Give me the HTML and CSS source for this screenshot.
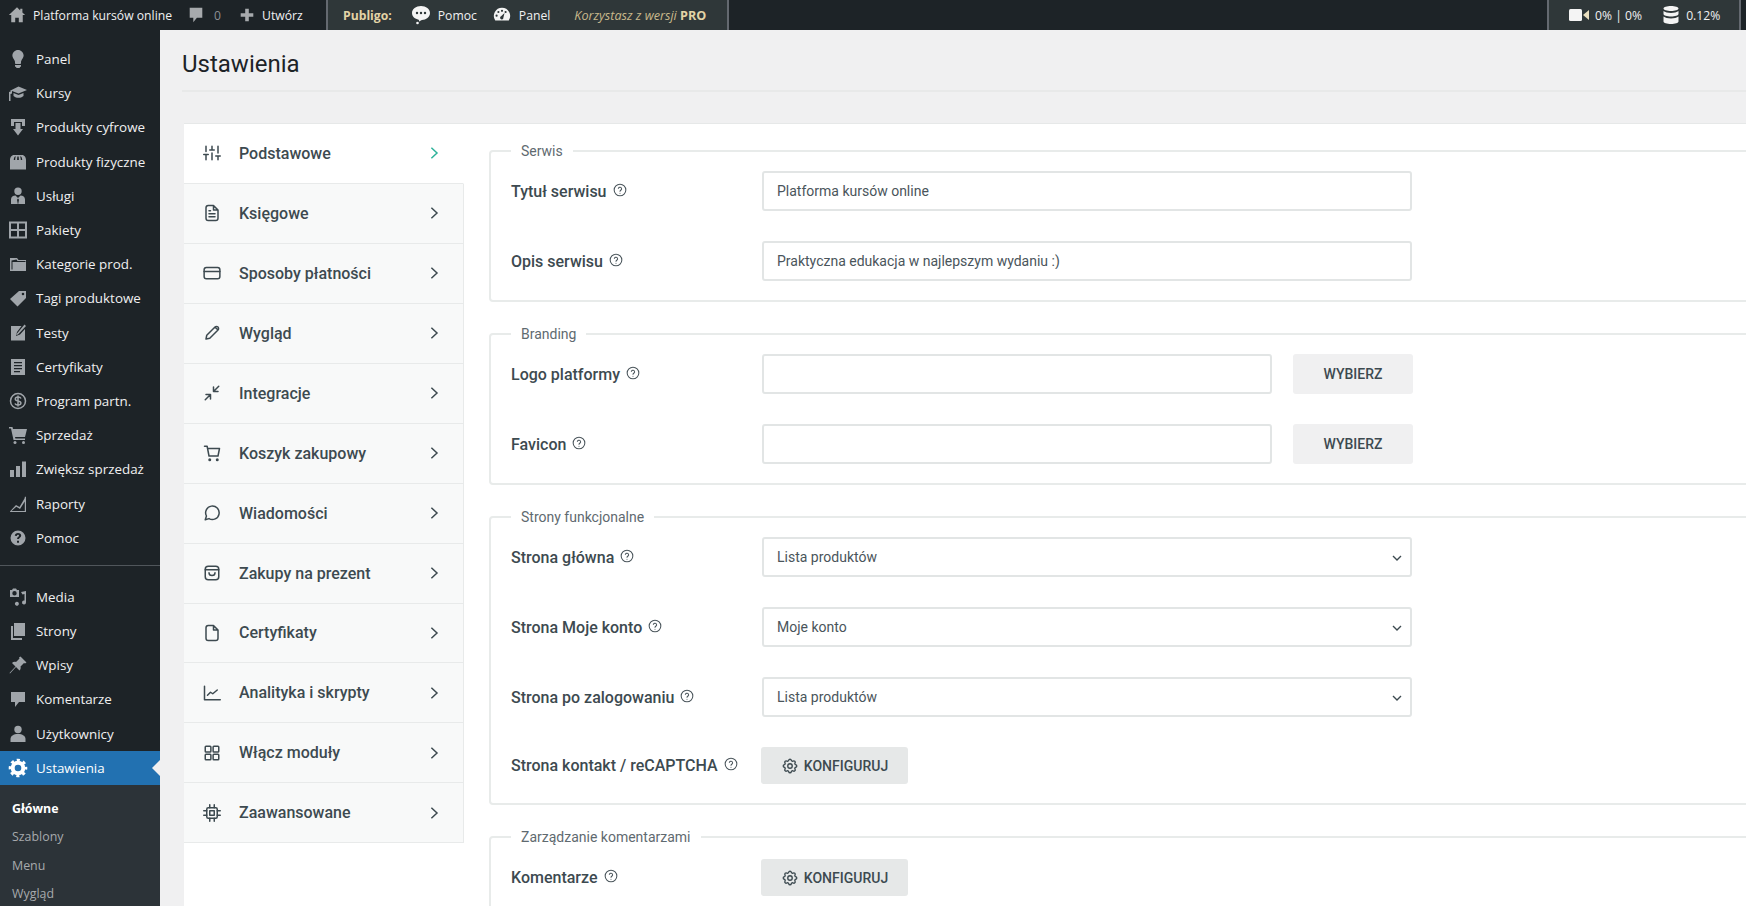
FILE: index.html
```html
<!DOCTYPE html>
<html lang="pl">
<head>
  <meta charset="UTF-8" />
  <title>Ustawienia</title>
  <link rel="stylesheet" href="styles.css">
</head>
<body>

  <svg class="sprite" xmlns="http://www.w3.org/2000/svg">
    <symbol id="i-help" viewBox="0 0 24 24"><circle cx="12" cy="12" r="10"/><path d="M9.2 9.2a2.9 2.9 0 0 1 5.6 1c0 1.9-2.8 2.4-2.8 4"/><path d="M12 17.4v.2"/></symbol>
    <symbol id="i-chev" viewBox="0 0 24 24"><path d="M8.5 5l7.5 7-7.5 7"/></symbol>
    <symbol id="i-gear" viewBox="0 0 24 24"><circle cx="12" cy="12" r="3"/><path d="M10.3 4.3c.4-1.8 3-1.8 3.4 0a1.7 1.7 0 0 0 2.6 1.1c1.5-.9 3.3.8 2.4 2.4a1.7 1.7 0 0 0 1 2.5c1.8.4 1.8 3 0 3.4a1.7 1.7 0 0 0-1 2.6c.9 1.5-.9 3.3-2.4 2.4a1.7 1.7 0 0 0-2.6 1c-.4 1.8-3 1.8-3.4 0a1.7 1.7 0 0 0-2.6-1c-1.5.9-3.3-.9-2.4-2.4a1.7 1.7 0 0 0-1-2.6c-1.8-.4-1.8-3 0-3.4a1.7 1.7 0 0 0 1-2.5c-.9-1.6.9-3.3 2.4-2.4a1.7 1.7 0 0 0 2.6-1.1z"/></symbol>
    <symbol id="i-down" viewBox="0 0 24 24"><path d="M6 9l6 6 6-6"/></symbol>
  </svg>

  <!-- Top bar -->
  <header class="topbar">
    <div class="top-group top-site">
      <svg class="top-icon" viewBox="0 0 20 20"><path d="M10 1.5L1 10h2.6v8H8v-5h4v5h4.4v-8H19l-3-2.8V3h-2.4v2z"/></svg>
      <span class="site-name">Platforma kursów online</span>
      <svg class="top-icon comment-icon" viewBox="0 0 20 20"><path d="M3 2h14v11h-6l-4 5v-5H3z"/></svg>
      <span class="count">0</span>
      <svg class="top-icon plus-icon" viewBox="0 0 20 20"><path d="M8 3h4v5h5v4h-5v5H8v-5H3V8h5z"/></svg>
      <span>Utwórz</span>
    </div>
    <div class="top-panel publigo">
      <strong class="brand">Publigo:</strong>
      <svg class="white-icon bubble" viewBox="0 0 20 20"><path fill-rule="evenodd" d="M10 1c5 0 9 3 9 7s-4 7-8 7c-1 0-1.500 1-2.500 1.500-.5-.5-.3-1.300-.8-1.800C4 14 1 11.500 1 8c0-4 4-7 9-7zM6 6.800a1.200 1.200 0 1 0 0 2.400 1.200 1.200 0 0 0 0-2.400zm4 0a1.200 1.200 0 1 0 0 2.400 1.200 1.200 0 0 0 0-2.400zm4 0a1.200 1.200 0 1 0 0 2.400 1.200 1.200 0 0 0 0-2.400z"/><circle cx="6.500" cy="18" r="1.300"/></svg>
      <span class="pomoc">Pomoc</span>
      <svg class="white-icon gauge" viewBox="0 0 20 20"><path fill-rule="evenodd" d="M10 2a9 9 0 0 1 7.500 14h-15A9 9 0 0 1 10 2zM6 5.500a1.200 1.200 0 1 0 0 2.400 1.200 1.200 0 0 0 0-2.400zm4-1.300a1.200 1.200 0 1 0 0 2.400 1.200 1.200 0 0 0 0-2.400zm4 1.300a1.200 1.200 0 1 0 0 2.400 1.200 1.200 0 0 0 0-2.400zM4 9.500a1.200 1.200 0 1 0 0 2.400 1.200 1.200 0 0 0 0-2.400zm8.800-1.700L9 11.500a1.800 1.800 0 1 0 2.500 1.500z"/></svg>
      <span>Panel</span>
      <span class="pro-note"><em>Korzystasz z wersji</em> <strong>PRO</strong></span>
    </div>
    <div class="top-panel usage">
      <svg class="white-icon video" viewBox="0 0 20 14"><rect x="0" y="1" width="13" height="12" rx="1.500"/><path d="M14 7l6-5v10z" class="tan"/></svg>
      <span class="usage-text">0% | 0%</span>
      <svg class="white-icon db" viewBox="0 0 16 20"><path d="M8 1c4 0 7.500 1 7.500 2.500S12 6 8 6 .5 5 .5 3.500 4 1 8 1zM.5 6C2 7.300 5 8 8 8s6-.7 7.500-2v3C15.500 10.500 12 11.500 8 11.500S.5 10.500.5 9zm0 5.500C2 12.800 5 13.500 8 13.500s6-.7 7.500-2v5C15.500 18 12 19 8 19s-7.500-1-7.500-2.500z"/></svg>
      <span>0.12%</span>
    </div>
  </header>

  <div class="layout">

    <!-- WP sidebar -->
    <nav class="sidebar">
      <ul class="side-menu">
        <li class="side-item"><svg viewBox="0 0 20 20"><path d="M10 1c3.110 0 5.630 2.520 5.630 5.620 0 1.840-2.030 4.580-2.030 4.580-.33.44-.6 1.250-.6 1.800v1c0 .55-.45 1-1 1H8c-.55 0-1-.45-1-1v-1c0-.55-.27-1.360-.6-1.800 0 0-2.020-2.740-2.020-4.580C4.380 3.520 6.890 1 10 1zM7 16.870V16h6v.87c0 .62-.13 1.130-.75 1.130H12c0 .62-.4 1-1.020 1h-2c-.61 0-.98-.38-.98-1h-.25c-.62 0-.75-.51-.75-1.130z"/></svg>Panel</li>
        <li class="side-item"><svg viewBox="0 0 20 20"><path d="M10.500 3.500L19 7l-8.500 3.500L4 8v2.500l-1.500.6V8L2 7.800zM5.500 10l5 2 5-2v3c-1.500 1.300-3.200 1.800-5 1.800s-3.500-.5-5-1.800zM1 9l1.500-.6V18H1z"/></svg>Kursy</li>
        <li class="side-item"><svg viewBox="0 0 20 20"><path d="M3 2h14v7h-3V5H6v4H3zM7.500 6h5v6h2.500l-5 6.500L5 12h2.500z"/></svg>Produkty cyfrowe</li>
        <li class="side-item"><svg viewBox="0 0 20 20"><path fill-rule="evenodd" d="M6 3h8c2.500 0 4 2.500 4 5v9.500H2V8c0-2.500 1.500-5 4-5zM7 4.500C6 5.500 5.800 7 5.800 8h1.400c0-1 .1-2.500.7-3.500zM10.600 4.500h-1.200c-.2 1-.3 2.500-.3 3.500h1.800c0-1-.1-2.500-.3-3.500zM12 4.500c.6 1 .8 2.500.8 3.500h1.400c0-1-.2-2.500-1.200-3.500z"/></svg>Produkty fizyczne</li>
        <li class="side-item"><svg viewBox="0 0 20 20"><path fill-rule="evenodd" d="M10 1.500a3.700 3.700 0 1 1 0 7.400 3.700 3.700 0 0 1 0-7.400zM3 18v-4.500c0-2.500 2-4 4.500-4L10 12l2.500-2.500c2.500 0 4.500 1.500 4.500 4V18zM10 12.500l-1 1.200.8 4.300h.4l.8-4.300z"/></svg>Usługi</li>
        <li class="side-item"><svg viewBox="0 0 20 20"><path fill-rule="evenodd" d="M1 1.500h18v17H1zM3 3.500v5.500h6V3.500zM11 3.500v5.500h6V3.500zM3 11v5.500h6V11zM11 11v5.500h6V11z"/></svg>Pakiety</li>
        <li class="side-item"><svg viewBox="0 0 20 20"><path fill-rule="evenodd" d="M2 4h7l1.500 2H18v11H2zM3.500 6.500V15.500h1V8h13V7h-8L8.500 5.500z"/></svg>Kategorie prod.</li>
        <li class="side-item"><svg viewBox="0 0 20 20"><path fill-rule="evenodd" d="M11 3h7v7l-8.500 8.500L2 11zM15 4.700a1.300 1.300 0 1 0 0 2.600 1.300 1.300 0 0 0 0-2.600z"/></svg>Tagi produktowe</li>
        <li class="side-item"><svg viewBox="0 0 20 20"><path d="M3 3h10.500L9 9l-1 4 4-1.500 5-5.500v11.500H3zM16.500 1.500l1.500 1.500-8 8.500-1.500.5.500-1.500z"/></svg>Testy</li>
        <li class="side-item"><svg viewBox="0 0 20 20"><path fill-rule="evenodd" d="M3 2h14v16H3zM6 5v1.200h8V5zM6 8v1.200h8V8zM6 11v1.200h8V11zM6 14v1.200h6V14z"/></svg>Certyfikaty</li>
        <li class="side-item"><svg class="line-icon" viewBox="0 0 20 20"><circle cx="10" cy="10" r="7.500"/><path d="M13 7.500c-.5-1-1.600-1.500-3-1.500-1.600 0-2.700.8-2.700 2s1.100 1.700 2.700 2 2.900.8 2.900 2-1.300 2-2.900 2c-1.500 0-2.600-.5-3.100-1.500M10 4.500v11"/></svg>Program partn.</li>
        <li class="side-item"><svg viewBox="0 0 20 20"><path d="M1 2h3.500l.5 2h14l-2 8H7l.4 1.500H17V15H5.500L3 3.500H1z"/><circle cx="7" cy="17.500" r="1.500"/><circle cx="15.500" cy="17.500" r="1.500"/></svg>Sprzedaż</li>
        <li class="side-item"><svg viewBox="0 0 20 20"><path d="M2 11h4v7H2zM8 7h4v11H8zM14 2.500h4V18h-4z"/></svg>Zwiększ sprzedaż</li>
        <li class="side-item"><svg viewBox="0 0 20 20"><path fill-rule="evenodd" d="M18 3v15H2v-.6L8 11l3.500 2 5-8.500L17 2.500zM3.500 17h13.300V7.500L12 15 8.300 12.800z"/></svg>Raporty</li>
        <li class="side-item"><svg viewBox="0 0 20 20"><path fill-rule="evenodd" d="M10 2.500a7.500 7.500 0 1 1 0 15 7.500 7.500 0 0 1 0-15zM10 5c-1.800 0-3 1-3.200 2.700l2 .2c.1-.8.500-1.200 1.200-1.200s1 .4 1 1c0 1-2 1.400-2 3.300h2c0-1.300 2.200-1.600 2.200-3.500C13.200 6 11.900 5 10 5zM9 12.700v2h2v-2z"/></svg>Pomoc</li>
      </ul>
      <div class="side-sep"></div>
      <ul class="side-menu">
        <li class="side-item"><svg viewBox="0 0 20 20"><path fill-rule="evenodd" d="M2 3h2l1-1.500h3L9 3h2v7H2zM6.500 4a2.200 2.200 0 1 0 0 4.400 2.200 2.200 0 0 0 0-4.400zM13 5l5-1v11.500a2 2 0 1 1-1.500-2V7l-2 .4zM8 15a2 2 0 1 1 0 3.600A2 2 0 0 1 8 15z"/></svg>Media</li>
        <li class="side-item"><svg viewBox="0 0 20 20"><path d="M6 2h11v13H6z"/><path d="M3 5h2v12h9v2H3z"/></svg>Strony</li>
        <li class="side-item"><svg viewBox="0 0 20 20"><path d="M12.500 1.500l6 6-1.500 1-1-.5-3.500 3.500c.5 1.500 0 3-1 4L8 12l-6 6.500-.5-.5L7.500 11.500 4 8c1-1 2.500-1.500 4-1l3.500-3.500-.5-1z"/></svg>Wpisy</li>
        <li class="side-item"><svg viewBox="0 0 20 20"><path d="M3 3h14v10h-6l-4 5v-5H3z"/></svg>Komentarze</li>
        <li class="side-item"><svg viewBox="0 0 20 20"><circle cx="10" cy="5.500" r="3.700"/><path d="M2.500 18v-3c0-3 3-5 7.500-5s7.500 2 7.500 5v3z"/></svg>Użytkownicy</li>
        <li class="side-item active"><svg class="gear-fill" viewBox="0 0 20 20"><circle cx="10" cy="10" r="5.300" class="gear-body"/><circle cx="10" cy="10" r="7.800" class="gear-teeth"/></svg>Ustawienia</li>
      </ul>
      <ul class="side-sub">
        <li class="current">Główne</li>
        <li>Szablony</li>
        <li>Menu</li>
        <li>Wygląd</li>
      </ul>
    </nav>

    <main class="main">
      <h1 class="page-title">Ustawienia</h1>

      <div class="card">

        <!-- Settings groups -->
        <ul class="group-menu">
          <li class="group-item active">
            <svg class="group-icon" viewBox="0 0 24 24"><path d="M4 21v-7M4 10V3M12 21v-9M12 8V3M20 21v-5M20 12V3M1 14h6M9 8h6M17 16h6"/></svg>
            <span>Podstawowe</span>
            <svg class="chev"><use href="#i-chev"/></svg>
          </li>
          <li class="group-item">
            <svg class="group-icon" viewBox="0 0 24 24"><path d="M14 2H7a3 3 0 0 0-3 3v14a3 3 0 0 0 3 3h10a3 3 0 0 0 3-3V8zM14 2v6h6M8 13h8M8 17h8M8 9h2"/></svg>
            <span>Księgowe</span>
            <svg class="chev"><use href="#i-chev"/></svg>
          </li>
          <li class="group-item">
            <svg class="group-icon" viewBox="0 0 24 24"><rect x="1.500" y="4.500" width="21" height="15" rx="3"/><path d="M1.500 10h21"/></svg>
            <span>Sposoby płatności</span>
            <svg class="chev"><use href="#i-chev"/></svg>
          </li>
          <li class="group-item">
            <svg class="group-icon" viewBox="0 0 24 24"><path d="M16 4l4 4L9 19l-5 1 1-5zM16 4c1-1 3-1 4 0s1 3 0 4"/></svg>
            <span>Wygląd</span>
            <svg class="chev"><use href="#i-chev"/></svg>
          </li>
          <li class="group-item">
            <svg class="group-icon" viewBox="0 0 24 24"><path d="M4 14h6v6M20 10h-6V4M14 10l7-7M3 21l7-7"/></svg>
            <span>Integracje</span>
            <svg class="chev"><use href="#i-chev"/></svg>
          </li>
          <li class="group-item">
            <svg class="group-icon" viewBox="0 0 24 24"><circle cx="9" cy="21" r="1"/><circle cx="19" cy="21" r="1"/><path d="M2 3h3.500L8 16h12l2-10H6"/></svg>
            <span>Koszyk zakupowy</span>
            <svg class="chev"><use href="#i-chev"/></svg>
          </li>
          <li class="group-item">
            <svg class="group-icon" viewBox="0 0 24 24"><path d="M3 21l1.600-5A9 9 0 1 1 8 19.500z"/></svg>
            <span>Wiadomości</span>
            <svg class="chev"><use href="#i-chev"/></svg>
          </li>
          <li class="group-item">
            <svg class="group-icon" viewBox="0 0 24 24"><rect x="3" y="3" width="18" height="18" rx="4"/><path d="M3 7.500h18M8 11.500c0 5 8 5 8 0"/></svg>
            <span>Zakupy na prezent</span>
            <svg class="chev"><use href="#i-chev"/></svg>
          </li>
          <li class="group-item">
            <svg class="group-icon" viewBox="0 0 24 24"><path d="M14 2H7a3 3 0 0 0-3 3v14a3 3 0 0 0 3 3h10a3 3 0 0 0 3-3V8zM14 2v6h6"/></svg>
            <span>Certyfikaty</span>
            <svg class="chev"><use href="#i-chev"/></svg>
          </li>
          <li class="group-item">
            <svg class="group-icon" viewBox="0 0 24 24"><path d="M2 3v18h21M6 15l4-4 3 2 6-5"/></svg>
            <span>Analityka i skrypty</span>
            <svg class="chev"><use href="#i-chev"/></svg>
          </li>
          <li class="group-item">
            <svg class="group-icon" viewBox="0 0 24 24"><rect x="3" y="3" width="7.500" height="7.500" rx="1"/><rect x="13.500" y="3" width="7.500" height="7.500" rx="1"/><rect x="3" y="13.500" width="7.500" height="7.500" rx="1"/><rect x="13.500" y="13.500" width="7.500" height="7.500" rx="1"/></svg>
            <span>Włącz moduły</span>
            <svg class="chev"><use href="#i-chev"/></svg>
          </li>
          <li class="group-item">
            <svg class="group-icon" viewBox="0 0 24 24"><rect x="5" y="5" width="14" height="14" rx="2"/><rect x="9" y="9" width="6" height="6"/><path d="M9 1v4M15 1v4M9 19v4M15 19v4M1 9h4M1 15h4M19 9h4M19 15h4"/></svg>
            <span>Zaawansowane</span>
            <svg class="chev"><use href="#i-chev"/></svg>
          </li>
        </ul>

        <div class="groups">

          <fieldset class="box">
            <legend>Serwis</legend>
            <div class="row">
              <label class="row-label">Tytuł serwisu <svg class="help"><use href="#i-help"/></svg></label>
              <input class="field" type="text" value="Platforma kursów online">
            </div>
            <div class="row">
              <label class="row-label">Opis serwisu <svg class="help"><use href="#i-help"/></svg></label>
              <input class="field" type="text" value="Praktyczna edukacja w najlepszym wydaniu :)">
            </div>
          </fieldset>

          <fieldset class="box">
            <legend>Branding</legend>
            <div class="row">
              <label class="row-label">Logo platformy <svg class="help"><use href="#i-help"/></svg></label>
              <input class="field short" type="text">
              <button class="btn-pick">WYBIERZ</button>
            </div>
            <div class="row">
              <label class="row-label">Favicon <svg class="help"><use href="#i-help"/></svg></label>
              <input class="field short" type="text">
              <button class="btn-pick">WYBIERZ</button>
            </div>
          </fieldset>

          <fieldset class="box">
            <legend>Strony funkcjonalne</legend>
            <div class="row">
              <label class="row-label">Strona główna <svg class="help"><use href="#i-help"/></svg></label>
              <div class="select-wrap">
                <select class="field"><option>Lista produktów</option></select>
                <svg class="select-arrow"><use href="#i-down"/></svg>
              </div>
            </div>
            <div class="row">
              <label class="row-label">Strona Moje konto <svg class="help"><use href="#i-help"/></svg></label>
              <div class="select-wrap">
                <select class="field"><option>Moje konto</option></select>
                <svg class="select-arrow"><use href="#i-down"/></svg>
              </div>
            </div>
            <div class="row">
              <label class="row-label">Strona po zalogowaniu <svg class="help"><use href="#i-help"/></svg></label>
              <div class="select-wrap">
                <select class="field"><option>Lista produktów</option></select>
                <svg class="select-arrow"><use href="#i-down"/></svg>
              </div>
            </div>
            <div class="row row-btn">
              <label class="row-label">Strona kontakt / reCAPTCHA <svg class="help"><use href="#i-help"/></svg></label>
              <button class="btn-config"><svg class="gear"><use href="#i-gear"/></svg>KONFIGURUJ</button>
            </div>
          </fieldset>

          <fieldset class="box">
            <legend>Zarządzanie komentarzami</legend>
            <div class="row row-btn">
              <label class="row-label">Komentarze <svg class="help"><use href="#i-help"/></svg></label>
              <button class="btn-config"><svg class="gear"><use href="#i-gear"/></svg>KONFIGURUJ</button>
            </div>
          </fieldset>

        </div>
      </div>
    </main>
  </div>

</body>
</html>
```

FILE: styles.css
```css
* {
  box-sizing: border-box;
}

html, body {
  height: 906px;
  overflow: hidden;
}

body {
  margin: 0;
  font-family: "Open Sans", "Noto Sans", sans-serif;
  background-color: #f0f0f1;
  color: #3c434a;
}

ul {
  list-style: none;
  margin: 0;
  padding: 0;
}

.sprite {
  display: none;
}

/* Top bar */
.topbar {
  display: flex;
  height: 30px;
  background-color: #1d2327;
  color: #f0f0f1;
  font-size: 12.2px;
}

.top-group,
.top-panel {
  display: flex;
  align-items: center;
}

.top-group {
  padding-left: 8px;
  width: 326px;
}

.top-icon {
  width: 18px;
  height: 18px;
  fill: #a7aaad;
  flex: none;
}

.site-name {
  margin-left: 7px;
}

.comment-icon {
  margin-left: 15px;
}

.count {
  margin-left: 9px;
  color: #8c8f94;
}

.plus-icon {
  margin-left: 17px;
  margin-right: 6px;
}

.top-panel {
  height: 30px;
  background-color: #2f3739;
  border-left: 2px solid #646970;
  border-right: 2px solid #646970;
}

.publigo {
  width: 403px;
  padding-left: 15px;
}

.brand {
  color: #e3d3a6;
  font-weight: 700;
  margin-right: 19px;
}

.white-icon {
  fill: #f4f4f4;
  flex: none;
}

.bubble {
  width: 20px;
  height: 20px;
  margin-right: 7px;
}

.pomoc {
  margin-right: 16px;
}

.gauge {
  width: 18px;
  height: 18px;
  margin-right: 8px;
}

.pro-note {
  margin-left: 24px;
  color: #c9b98c;
  font-size: 12.6px;
}

.pro-note strong {
  color: #e3d3a6;
}

.usage {
  margin-left: auto;
  margin-right: 5px;
  width: 194px;
  padding-left: 20px;
}

.video {
  width: 20px;
  height: 14px;
  margin-right: 6px;
}

.video .tan {
  fill: #e9dfbf;
}

.usage-text {
  margin-right: 21px;
}

.db {
  width: 16px;
  height: 20px;
  margin-right: 7px;
}

/* Layout */
.layout {
  display: flex;
  height: 876px;
}

.sidebar {
  width: 160px;
  flex: none;
  padding-top: 12px;
  background-color: #1d2327;
  color: #f0f0f1;
}

.side-item {
  position: relative;
  display: flex;
  align-items: center;
  height: 34.2px;
  font-size: 13.4px;
}

.side-item svg {
  width: 20px;
  height: 20px;
  margin: 0 8px 0 8px;
  fill: #a0a5aa;
  flex: none;
}

.side-item svg.line-icon {
  fill: none;
  stroke: #a0a5aa;
  stroke-width: 1.5;
}

.side-sep {
  height: 25px;
  padding-top: 10px;
}

.side-sep::before {
  content: "";
  display: block;
  height: 1px;
  background-color: #50565b;
}

.side-item.active {
  background-color: #2271b1;
  color: #fff;
}

.side-item.active::after {
  content: "";
  position: absolute;
  right: 0;
  top: 9px;
  border: 8px solid transparent;
  border-right-color: #f0f0f1;
  border-left-width: 0;
}

.gear-body {
  fill: none;
  stroke: #fff;
  stroke-width: 4;
}

.gear-teeth {
  fill: none;
  stroke: #fff;
  stroke-width: 3;
  stroke-dasharray: 3.100 3.030;
  stroke-dashoffset: 1.500;
}

.side-sub {
  background-color: #2c3338;
  padding: 10px 0 0;
  height: 130px;
  font-size: 12.4px;
  color: #a7aaad;
}

.side-sub li {
  height: 28.300px;
  line-height: 28px;
  padding-left: 12px;
}

.side-sub .current {
  color: #fff;
  font-weight: 700;
}

/* Main area */
.main {
  flex: 1;
  min-width: 0;
  font-family: Roboto, sans-serif;
}

.page-title {
  margin: 0 0 31px 22px;
  height: 62px;
  padding-top: 21px;
  border-bottom: 2px solid #e8e9e9;
  color: #1d2327;
  font-size: 24px;
  font-weight: 400;
  line-height: 27px;
}

.card {
  display: flex;
  align-items: flex-start;
  margin-left: 24px;
  height: 800px;
  background-color: #fff;
  border-top: 1px solid #e6e8e8;
}

/* Settings groups menu */
.group-menu {
  width: 280px;
  flex: none;
}

.group-item {
  display: flex;
  align-items: center;
  height: 59.950px;
  padding-left: 19px;
  background-color: #f8f9f9;
  border-bottom: 1px solid #e8eaea;
  border-right: 1px solid #e8eaea;
  color: #3d4a50;
  font-size: 16px;
  font-weight: 500;
}

.group-item.active {
  background-color: #fff;
  border-right-color: #fff;
}

.group-icon {
  width: 18px;
  height: 18px;
  margin-right: 18px;
  fill: none;
  stroke: #3d4a50;
  stroke-width: 2;
  stroke-linecap: round;
  stroke-linejoin: round;
  flex: none;
}

.chev {
  width: 18px;
  height: 18px;
  margin-left: auto;
  margin-right: 20px;
  fill: none;
  stroke: #3d4a50;
  stroke-width: 2;
}

.group-item.active .chev {
  stroke: #2fb39b;
}

/* Fieldsets */
.groups {
  flex: 1;
  min-width: 0;
  padding: 19px 0 0 25px;
  overflow: hidden;
  height: 800px;
}

.box {
  width: 1400px;
  margin: 0 0 24px;
  padding: 12px 0 19px 20px;
  border: 2px solid #e8ebea;
  border-radius: 4px;
  min-width: 0;
}

.box legend {
  margin-left: 0;
  padding: 0 10px;
  color: #5f6a70;
  font-size: 14px;
  line-height: 16px;
}

.row {
  display: flex;
  align-items: center;
  height: 40px;
  margin-bottom: 30px;
}

.row:last-child {
  margin-bottom: 0;
}

.row-label {
  display: flex;
  align-items: center;
  gap: 6px;
  width: 251px;
  flex: none;
  color: #3d4a50;
  font-size: 16px;
  font-weight: 500;
  white-space: nowrap;
}

.help {
  width: 14px;
  height: 14px;
  margin-top: -3px;
  fill: none;
  stroke: #4a555b;
  stroke-width: 1.800;
  stroke-linecap: round;
}

.field {
  display: block;
  width: 650px;
  height: 40px;
  padding: 0 13px;
  border: 2px solid #e2e5e5;
  border-radius: 3px;
  background-color: #fff;
  color: #4a555b;
  font-family: Roboto, sans-serif;
  font-size: 14px;
  appearance: none;
}

.field.short {
  width: 510px;
}

.select-wrap {
  position: relative;
}

.select-arrow {
  position: absolute;
  right: 7px;
  top: 13px;
  width: 16px;
  height: 16px;
  fill: none;
  stroke: #3d4a50;
  stroke-width: 2;
}

.btn-pick {
  width: 120px;
  height: 40px;
  margin-left: 21px;
  border: none;
  border-radius: 3px;
  background-color: #f0f0f1;
  color: #3d4a50;
  font-family: Roboto, sans-serif;
  font-size: 14px;
  font-weight: 500;
}

.row-btn {
  height: 37px;
  margin-top: 2px;
}

.btn-config {
  display: flex;
  align-items: center;
  justify-content: center;
  gap: 5px;
  width: 147px;
  height: 37px;
  margin-left: -1px;
  border: none;
  border-radius: 3px;
  background-color: #e6e8e8;
  color: #3d4a50;
  font-family: Roboto, sans-serif;
  font-size: 14px;
  font-weight: 500;
}

.gear {
  width: 18px;
  height: 18px;
  fill: none;
  stroke: #3d4a50;
  stroke-width: 1.800;
}
```
